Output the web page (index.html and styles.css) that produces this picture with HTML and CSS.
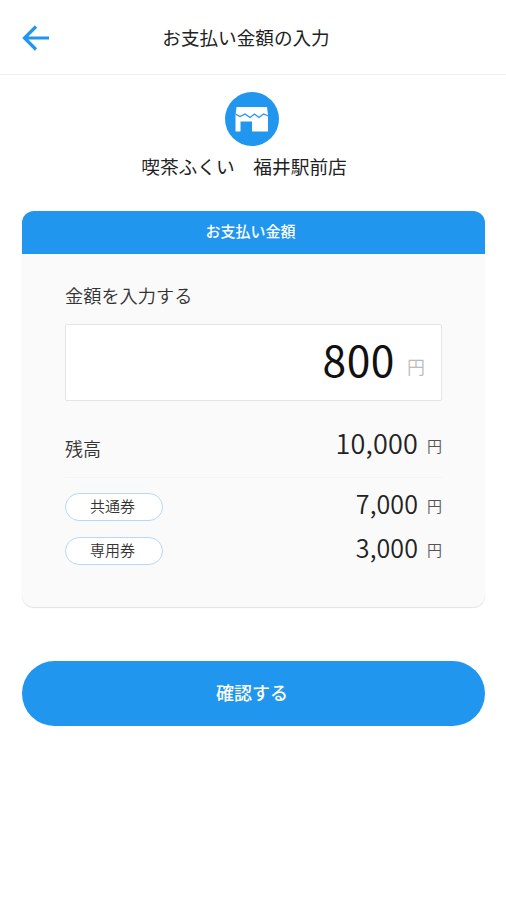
FILE: index.html
```html
<!DOCTYPE html>
<html lang="ja">
<head>
<meta charset="utf-8">
<title>お支払い金額の入力</title>
<link rel="stylesheet" href="styles.css">
</head>
<body>
<header class="bar">
  <svg class="back" viewBox="0 0 28 28" width="28" height="28"><path d="M27 14H3M14 2.500L2.500 14L14 25.500" fill="none" stroke="#2196ee" stroke-width="3.200"/></svg>
  <h1 class="title">お支払い金額の入力</h1>
</header>
<section class="shop">
  <svg class="shop-icon" viewBox="0 0 54 54" width="54" height="54"><circle cx="27" cy="27" r="27" fill="#2196ee"/><path d="M11.500 15H42L43 23V39.500H27V29.500H15.500V39.500H10.500V23Z" fill="#fff"/><path d="M10.500 22L15 24.500L20 22L25 25.500L29.500 22L34 25.500L38.500 22L43.500 24" fill="none" stroke="#2196ee" stroke-width="1.300"/></svg>
  <p class="shop-name">喫茶ふくい　福井駅前店</p>
</section>
<main class="card">
  <h2 class="card-head">お支払い金額</h2>
  <div class="card-body">
    <p class="label">金額を入力する</p>
    <div class="field"><span class="amount">800</span><span class="yen">円</span></div>
    <div class="row balance"><span class="name">残高</span><span class="price"><span class="num total">10,000</span><span class="unit">円</span></span></div>
    <div class="row sub"><span class="pill">共通券</span><span class="price"><span class="num">7,000</span><span class="unit">円</span></span></div>
    <div class="row sub"><span class="pill">専用券</span><span class="price"><span class="num">3,000</span><span class="unit">円</span></span></div>
  </div>
</main>
<button class="confirm">確認する</button>
</body>
</html>
```
FILE: styles.css
```css
* { box-sizing: border-box; margin: 0; padding: 0; }
body { height: 900px; background: #fff; color: #333; font-family: "Noto Sans CJK JP", sans-serif; overflow: hidden; }
.bar { display: grid; grid-template-columns: 28px 1fr 28px; align-items: center; height: 75px; padding: 2px 36px 0 22px; border-bottom: 1px solid #f2f2f2; }
.title { margin-top: -3px; font-size: 18.600px; font-weight: 400; text-align: center; color: #222; }
.shop { display: flex; flex-direction: column; align-items: center; padding: 17px 3px 0 0; height: 136px; }
.shop-name { margin: 6px 15px 0 0; font-size: 18.700px; line-height: 28px; color: #222; }
.card { width: 463px; height: 396px; margin-left: 22px; border-radius: 12px; background: #fafafa; overflow: hidden; box-shadow: 0 1px 1px #e2e2e2; }
.card-head { height: 43px; padding-right: 6px; background: #2196ee; color: #fff; font-size: 15px; line-height: 40px; font-weight: 500; text-align: center; }
.card-body { padding: 27px 43px 0; }
.label { font-size: 18.200px; line-height: 28px; font-weight: 350; }
.field { display: flex; justify-content: flex-end; align-items: baseline; height: 77px; margin-top: 15px; padding-right: 16px; border: 1px solid #e4e4e4; border-radius: 2px; background: #fff; line-height: 68px; }
.amount { font-size: 42.500px; letter-spacing: 0.600px; color: #111; font-weight: 400; }
.yen { position: relative; top: -3px; margin-left: 12px; font-size: 18px; color: #bbb; font-weight: 350; }
.row { display: flex; align-items: center; justify-content: space-between; }
.balance { height: 77px; border-bottom: 1px solid #f4f4f4; margin-bottom: 7px; padding-top: 10px; }
.name { padding-top: 7px; font-size: 18px; font-weight: 350; }
.price { display: flex; align-items: baseline; line-height: 32px; padding-bottom: 4px; }
.balance .price { padding: 2px 0 0; }
.num { font-size: 25px; letter-spacing: 0.100px; font-weight: 350; color: #222; }
.total { font-size: 27px; letter-spacing: 0.200px; }
.unit { position: relative; top: -2px; margin-left: 9px; font-size: 15px; font-weight: 350; color: #555; }
.sub { height: 44px; }
.pill { width: 98px; height: 28px; padding-right: 3px; border: 1px solid #b5d8f7; border-radius: 14px; background: #fff; font-size: 15px; line-height: 24px; text-align: center; font-weight: 350; }
.confirm { display: block; width: 463px; height: 65px; margin: 54px 0 0 22px; padding: 0 3px 4px 0; border: 0; border-radius: 33px; background: #2196ee; color: #fff; font: 500 18px "Noto Sans CJK JP", sans-serif; }
```
